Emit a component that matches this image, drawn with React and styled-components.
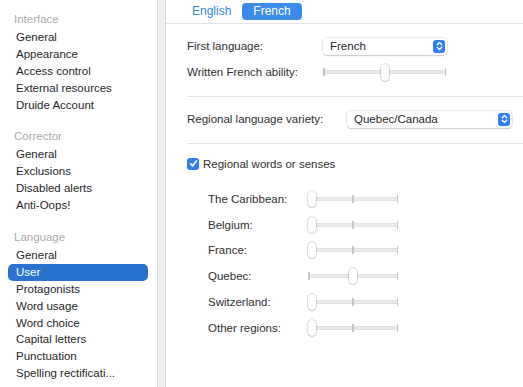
import React from "react";
import styled, { createGlobalStyle } from "styled-components";

const Global = createGlobalStyle`
  html, body { margin: 0; padding: 0; background: #fff; }
  body {
    width: 523px; height: 387px; overflow: hidden;
    font-family: "Liberation Sans", Arial, sans-serif;
    -webkit-font-smoothing: antialiased;
  }
  * { box-sizing: border-box; }
`;

const Window = styled.div`
  display: flex;
  width: 523px;
  height: 387px;
  background: #fff;
`;

const Sidebar = styled.nav`
  width: 157px;
  flex: none;
  padding-top: 10.5px;
  display: flex;
  flex-direction: column;
`;

const Section = styled.div`
  display: flex;
  flex-direction: column;
  & + & { margin-top: 14.5px; }
`;

const SectionTitle = styled.div`
  font-size: 11.5px;
  line-height: 17px;
  color: #ababab;
  padding-left: 14px;
  margin-bottom: 1.5px;
`;

const Item = styled.div`
  font-size: 11.5px;
  line-height: 16.9px;
  height: 16.9px;
  margin: 0 9px 0 8px;
  padding-left: 8px;
  border-radius: 5px;
  white-space: nowrap;
  color: ${(p) => (p.$active ? "#fff" : "#262626")};
  background: ${(p) => (p.$active ? "#2a72cf" : "transparent")};
`;

const Splitter = styled.div`
  width: 9px;
  flex: none;
  background: #f1eeed;
  border-left: 1px solid #dcd8d7;
  border-right: 1px solid #d3d3d3;
`;

const Main = styled.main`
  flex: 1;
  display: flex;
  flex-direction: column;
  min-width: 0;
`;

const TabBar = styled.div`
  height: 24px;
  flex: none;
  display: flex;
  align-items: flex-start;
  padding: 3px 0 0 15px;
  border-bottom: 1px solid #e2e2e2;
`;

const Tab = styled.div`
  font-size: 12px;
  line-height: 16.5px;
  height: 16.5px;
  padding: 0 11px;
  border-radius: 4px;
  color: ${(p) => (p.$active ? "#fff" : "#2f86e0")};
  background: ${(p) => (p.$active ? "#3a8bea" : "transparent")};
`;

const Content = styled.div`
  padding-left: 21px;
  display: flex;
  flex-direction: column;
`;

const Group = styled.section`
  padding: ${(p) => p.$pad || "9px 0 11px"};
  & + & { border-top: 1px solid #e2e2e2; }
`;

const FormGrid = styled.div`
  display: grid;
  grid-template-columns: ${(p) => p.$label}px auto;
  grid-auto-rows: 26px;
  align-items: center;
  justify-items: start;
`;

const Label = styled.div`
  font-size: 11.5px;
  color: #2e2e2e;
  white-space: nowrap;
`;

const SelectBox = styled.div`
  width: ${(p) => p.$w}px;
  height: 17px;
  display: flex;
  align-items: center;
  justify-content: space-between;
  padding: 0 2px 0 7px;
  background: #fff;
  border-radius: 4px;
  box-shadow: 0 0 0 0.5px rgba(0, 0, 0, 0.14), 0 1px 1.5px rgba(0, 0, 0, 0.16);
  font-size: 11.5px;
  color: #262626;
`;

const Stepper = styled.span`
  width: 12px;
  height: 13px;
  border-radius: 3px;
  background: #2f7ff2;
  display: flex;
  align-items: center;
  justify-content: center;
`;

const SliderWrap = styled.div`
  position: relative;
  width: ${(p) => p.$w}px;
  height: ${(p) => p.$h}px;
  display: flex;
  align-items: center;
`;

const Track = styled.div`
  width: 100%;
  height: 4px;
  border-radius: 2px;
  background: #ebebeb;
  box-shadow: inset 0 0 0 0.5px rgba(0, 0, 0, 0.07);
`;

const Tick = styled.span`
  position: absolute;
  top: 50%;
  width: 1.5px;
  height: 8px;
  margin-top: -4px;
  background: #c6c6c6;
`;

const Thumb = styled.span`
  position: absolute;
  top: 0;
  width: 8px;
  height: 100%;
  border-radius: 4px;
  background: #fff;
  box-shadow: 0 0 0 0.5px rgba(0, 0, 0, 0.22), 0 0.5px 1.5px rgba(0, 0, 0, 0.2);
`;

const CheckRow = styled.label`
  display: flex;
  align-items: center;
  gap: 4px;
  height: 17px;
  font-size: 11.5px;
  color: #2e2e2e;
`;

const CheckBox = styled.span`
  width: 12px;
  height: 12px;
  border-radius: 3px;
  background: #2f7ff2;
  display: flex;
  align-items: center;
  justify-content: center;
`;

const RegionGrid = styled.div`
  margin-top: 14px;
  padding-left: 21px;
  display: grid;
  grid-template-columns: 100px auto;
  grid-auto-rows: 25.8px;
  align-items: center;
  justify-items: start;
`;

function Slider({ w, h, value, ticks }) {
  return (
    <SliderWrap $w={w} $h={h}>
      <Track />
      {ticks.map((t) => (
        <Tick key={t} style={{ left: t * (w - 1.5) }} />
      ))}
      <Thumb style={{ left: value * (w - 8) }} />
    </SliderWrap>
  );
}

function Select({ w, children }) {
  return (
    <SelectBox $w={w}>
      <span>{children}</span>
      <Stepper>
        <svg width="7" height="10" viewBox="0 0 7 10" fill="none" stroke="#fff" strokeWidth="1.3" strokeLinecap="round" strokeLinejoin="round">
          <path d="M1.2 3.8 L3.5 1.5 L5.8 3.8" />
          <path d="M1.2 6.2 L3.5 8.5 L5.8 6.2" />
        </svg>
      </Stepper>
    </SelectBox>
  );
}

const sections = [
  { title: "Interface", items: ["General", "Appearance", "Access control", "External resources", "Druide Account"] },
  { title: "Corrector", items: ["General", "Exclusions", "Disabled alerts", "Anti-Oops!"] },
  {
    title: "Language",
    items: ["General", "User", "Protagonists", "Word usage", "Word choice", "Capital letters", "Punctuation", "Spelling rectificati..."],
    active: "User",
  },
];

const regions = [
  ["The Caribbean:", 0],
  ["Belgium:", 0],
  ["France:", 0],
  ["Quebec:", 0.5],
  ["Switzerland:", 0],
  ["Other regions:", 0],
];

export default function App() {
  return (
    <>
      <Global />
      <Window>
        <Sidebar>
          {sections.map((s) => (
            <Section key={s.title}>
              <SectionTitle>{s.title}</SectionTitle>
              {s.items.map((it) => (
                <Item key={it} $active={s.active === it}>{it}</Item>
              ))}
            </Section>
          ))}
        </Sidebar>
        <Splitter />
        <Main>
          <TabBar>
            <Tab>English</Tab>
            <Tab $active>French</Tab>
          </TabBar>
          <Content>
            <Group $pad="9px 0 11px">
              <FormGrid $label={136}>
                <Label>First language:</Label>
                <Select w={124}>French</Select>
                <Label>Written French ability:</Label>
                <Slider w={123} h={17} value={0.5} ticks={[0, 1]} />
              </FormGrid>
            </Group>
            <Group $pad="9px 0 10.5px">
              <FormGrid $label={160}>
                <Label>Regional language variety:</Label>
                <Select w={165}>Quebec/Canada</Select>
              </FormGrid>
            </Group>
            <Group $pad="11.5px 0 0">
              <CheckRow>
                <CheckBox>
                  <svg width="9" height="9" viewBox="0 0 9 9" fill="none" stroke="#fff" strokeWidth="1.7" strokeLinecap="round" strokeLinejoin="round">
                    <path d="M1.6 4.8 L3.6 6.9 L7.4 1.9" />
                  </svg>
                </CheckBox>
                Regional words or senses
              </CheckRow>
              <RegionGrid>
                {regions.map(([name, v]) => (
                  <React.Fragment key={name}>
                    <Label>{name}</Label>
                    <Slider w={90} h={16} value={v} ticks={[0, 0.5, 1]} />
                  </React.Fragment>
                ))}
              </RegionGrid>
            </Group>
          </Content>
        </Main>
      </Window>
    </>
  );
}
